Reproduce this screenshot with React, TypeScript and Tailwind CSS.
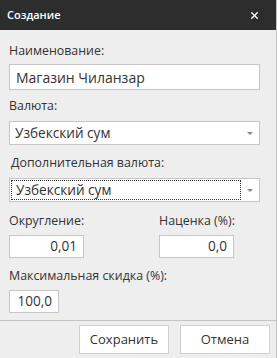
import { X } from 'lucide-react';

const Label = ({ children, className = '' }: { children: React.ReactNode; className?: string }) => (
  <div className={`text-[12.4px] leading-[16px] text-[#333333] ${className}`}>{children}</div>
);

const Select = ({ value, focused }: { value: string; focused?: boolean }) => (
  <div className="flex h-[24px] w-[251px] items-center border border-[#c6c6c6] bg-white">
    <div
      className={`ml-[1px] flex h-[20px] flex-1 items-center pl-[4px] text-[13.6px] text-[#333333] ${
        focused ? 'border border-dotted border-[#333333]' : ''
      }`}
    >
      {value}
    </div>
    <div className="flex w-[18px] justify-center">
      <div className="h-0 w-0 border-x-[3px] border-t-[3px] border-x-transparent border-t-[#8a8a8a]" />
    </div>
  </div>
);

const NumberInput = ({ value, width }: { value: string; width: string }) => (
  <div className={`flex h-[23px] ${width} items-center justify-end border border-[#c6c6c6] bg-white pr-[6px] text-[13.6px] text-[#333333]`}>
    {value}
  </div>
);

const App = () => {
  return (
    <div className="flex h-[358px] w-[277px] bg-[#c4c4c4]" style={{ fontFamily: '"Open Sans", "Noto Sans", sans-serif' }}>
      <div className="flex w-[276px] flex-col bg-[#eeeeee]">
        <div className="flex h-[30px] items-center justify-between bg-[#2d2d2d] pl-[7px] pr-[16px]">
          <span className="text-[11px] font-semibold text-white">Создание</span>
          <X className="h-[11px] w-[11px] text-white" strokeWidth={3} />
        </div>

        <div className="flex flex-1 flex-col px-[9px] pt-[13px]">
          <Label>Наименование:</Label>
          <div className="mt-[5px] flex h-[26px] w-[251px] items-center border border-[#c6c6c6] bg-white pl-[6px] text-[14px] text-[#333333]">
            Магазин Чиланзар
          </div>

          <Label className="mt-[8px]">Валюта:</Label>
          <div className="mt-[7px]">
            <Select value="Узбекский сум" />
          </div>

          <Label className="ml-[2px] mt-[10px]">Дополнительная валюта:</Label>
          <div className="mt-[7px]">
            <Select value="Узбекский сум" focused />
          </div>

          <div className="mt-[11px] flex">
            <div className="flex w-[150px] flex-col">
              <Label>Округление:</Label>
              <div className="mt-[6px]">
                <NumberInput value="0,01" width="w-[75px]" />
              </div>
            </div>
            <div className="flex flex-col">
              <Label>Наценка (%):</Label>
              <div className="mt-[6px]">
                <NumberInput value="0,0" width="w-[75px]" />
              </div>
            </div>
          </div>

          <Label className="mt-[10px]">Максимальная скидка (%):</Label>
          <div className="mt-[6px]">
            <NumberInput value="100,0" width="w-[50px]" />
          </div>
        </div>

        <div className="flex h-[38px] items-center justify-end gap-[11px] border-t border-[#c4c4c4] pr-[6px]">
          <button className="h-[29px] w-[90px] border border-[#d0d0d0] bg-white text-[13px] text-[#333333]">Сохранить</button>
          <button className="h-[29px] w-[90px] border border-[#d0d0d0] bg-white text-[13px] text-[#333333]">Отмена</button>
        </div>
      </div>
    </div>
  );
};

export default App;
